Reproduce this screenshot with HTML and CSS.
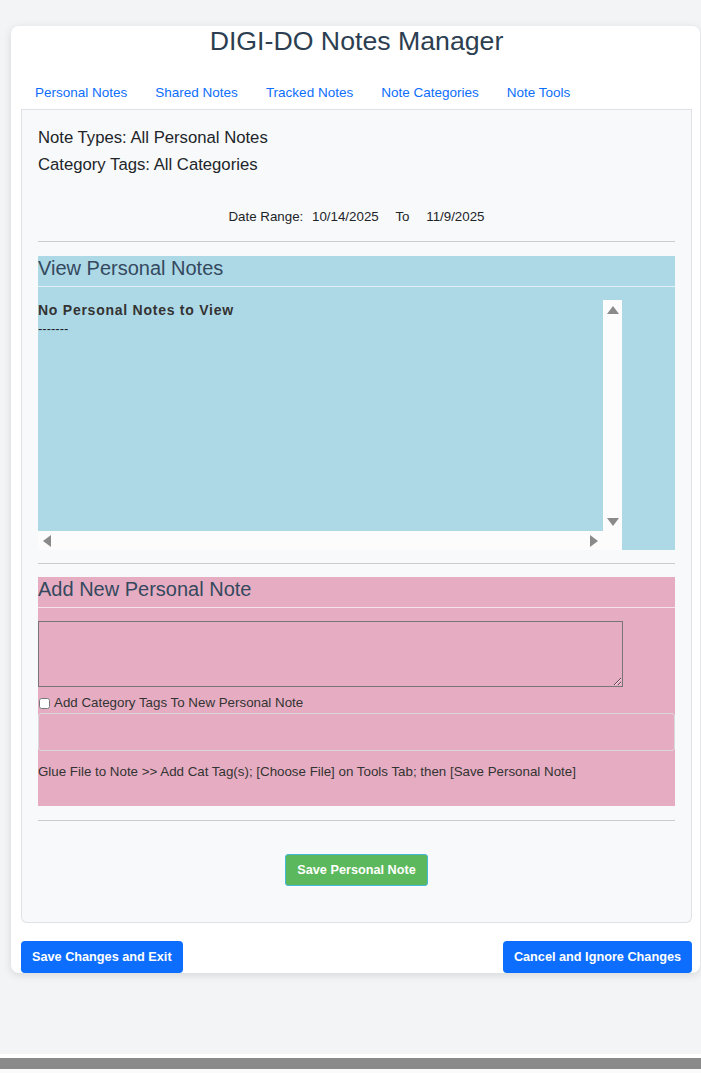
FILE: index.html
```html
<!DOCTYPE html>
<html lang="en">
<head>
  <meta charset="UTF-8" />
  <meta name="viewport" content="width=device-width, initial-scale=1.0" />
  <title>DIGI-DO Notes Manager</title>
  <link rel="stylesheet" href="styles.css">
</head>
<body>
  <div class="card">
    <h1 class="page-title">DIGI-DO Notes Manager</h1>
    <nav class="tabs">
      <a href="#" class="tab">Personal Notes</a>
      <a href="#" class="tab">Shared Notes</a>
      <a href="#" class="tab">Tracked Notes</a>
      <a href="#" class="tab">Note Categories</a>
      <a href="#" class="tab">Note Tools</a>
    </nav>
    <div class="tab-panel">
      <div class="filter-line">Note Types: All Personal Notes</div>
      <div class="filter-line">Category Tags: All Categories</div>
      <div class="date-range">
        <span>Date Range:</span>
        <span class="date-from">10/14/2025</span>
        <span class="date-to">To</span>
        <span>11/9/2025</span>
      </div>
      <hr class="divider">

      <section class="notes-block view-block">
        <h2 class="block-title">View Personal Notes</h2>
        <div class="scroll-box">
          <div class="scroll-content">
            <div class="empty-msg">No Personal Notes to View</div>
            <div class="dashes">-------</div>
          </div>
          <div class="vbar">
            <span class="arrow arrow-up"></span>
            <span class="arrow arrow-down"></span>
          </div>
          <div class="hbar">
            <span class="arrow arrow-left"></span>
            <span class="arrow arrow-right"></span>
          </div>
          <div class="corner"></div>
        </div>
      </section>
      <hr class="divider divider-tight">

      <section class="notes-block add-block">
        <h2 class="block-title">Add New Personal Note</h2>
        <textarea class="note-input"></textarea>
        <label class="tag-check"><input type="checkbox"> Add Category Tags To New Personal Note</label>
        <div class="tag-box"></div>
        <p class="hint">Glue File to Note &gt;&gt; Add Cat Tag(s); [Choose File] on Tools Tab; then [Save Personal Note]</p>
      </section>
      <hr class="divider divider-wide">

      <div class="save-row">
        <button class="btn btn-green">Save Personal Note</button>
      </div>
    </div>
    <div class="footer-actions">
      <button class="btn btn-blue">Save Changes and Exit</button>
      <button class="btn btn-blue">Cancel and Ignore Changes</button>
    </div>
  </div>
  <div class="page-bar"></div>
</body>
</html>
```

FILE: styles.css
```css
* { box-sizing: border-box; }
html, body { margin: 0; padding: 0; }
body {
  font-family: 'Liberation Sans', Arial, sans-serif;
  background: #f3f4f6;
  color: #212529;
  min-height: 100vh;
  display: flex;
  flex-direction: column;
  padding: 26px 1px 0 11px;
}
.card {
  background: #fff;
  border-radius: 8px;
  box-shadow: 0 2px 8px rgba(0, 0, 0, 0.12);
  padding: 0 8px 0 10px;
}
.page-title {
  margin: 0;
  text-align: center;
  font-size: 26.7px;
  font-weight: 400;
  line-height: 31px;
  color: #2c3e50;
}
.tabs {
  display: flex;
  margin-top: 17px;
  border-bottom: 1px solid #dee2e6;
}
.tab {
  padding: 10px 14px 7px;
  font-size: 13.5px;
  line-height: 18px;
  color: #0d6efd;
  text-decoration: none;
}
.tab-panel {
  background: #f8f9fa;
  border: 1px solid #dee2e6;
  border-top: none;
  border-radius: 0 0 6px 6px;
  padding: 14px 16px 36px 16px;
}
.filter-line {
  font-size: 16.7px;
  line-height: 27px;
  color: #212529;
}
.date-range {
  margin-top: 29px;
  text-align: center;
  font-size: 13.33px;
  line-height: 20px;
  color: #212529;
}
.date-from { margin-left: 5px; }
.date-to { margin: 0 13px; }
.divider {
  border: none;
  border-top: 1px solid #ccc;
  margin: 14px 0;
}
.divider-tight { margin: 13px 0; }
.view-block { background: #add8e6; }
.add-block { background: #e6adc2; padding-bottom: 26px; }
.block-title {
  margin: 0;
  font-size: 20px;
  font-weight: 400;
  line-height: 24px;
  color: #34495e;
  padding-bottom: 6px;
  border-bottom: 1px solid rgba(255, 255, 255, 0.65);
}
.scroll-box {
  margin-top: 13px;
  width: 584px;
  height: 250px;
  display: grid;
  grid-template-columns: 1fr 19px;
  grid-template-rows: 1fr 19px;
}
.scroll-content { overflow: hidden; }
.empty-msg {
  font-weight: bold;
  font-size: 14px;
  letter-spacing: 0.75px;
  line-height: 20px;
  color: #333;
}
.dashes { font-size: 13px; line-height: 17px; }
.vbar, .hbar, .corner { background: #fcfcfc; }
.vbar {
  display: flex;
  flex-direction: column;
  justify-content: space-between;
  align-items: center;
  padding: 6px 0 5px;
}
.hbar {
  display: flex;
  justify-content: space-between;
  align-items: center;
  padding: 0 5px;
}
.arrow { width: 0; height: 0; display: block; }
.arrow-up { border-left: 6px solid transparent; border-right: 6px solid transparent; border-bottom: 8px solid #8a8a8a; }
.arrow-down { border-left: 6px solid transparent; border-right: 6px solid transparent; border-top: 8px solid #8a8a8a; }
.arrow-left { border-top: 6px solid transparent; border-bottom: 6px solid transparent; border-right: 8px solid #8a8a8a; }
.arrow-right { border-top: 6px solid transparent; border-bottom: 6px solid transparent; border-left: 8px solid #8a8a8a; }
.note-input {
  display: block;
  margin-top: 13px;
  width: 585px;
  height: 66px;
  background: transparent;
  border: 1px solid #767676;
  font-family: inherit;
}
.tag-check {
  display: flex;
  align-items: center;
  margin: 8px 0 2px;
  font-size: 13.33px;
  line-height: 16px;
  color: #333;
}
.tag-check input { margin: 0 4px 0 1px; width: 11px; height: 11px; }
.tag-box {
  height: 38px;
  border: 1px solid #d9d9d9;
  border-radius: 3px;
}
.hint {
  margin: 13px 0 0;
  font-size: 13.33px;
  line-height: 16px;
  color: #333;
}
.save-row {
  display: flex;
  justify-content: center;
  padding-top: 19px;
}
.btn {
  font-family: inherit;
  font-size: 12.7px;
  font-weight: bold;
  color: #fff;
  border-radius: 4px;
  cursor: pointer;
}
.btn-green {
  background: #5cb85c;
  border: 1px solid #46b8da;
  padding: 0 11px;
  height: 32px;
  border-radius: 3px;
}
.btn-blue {
  background: #0d6efd;
  border: none;
  padding: 0 11px;
  height: 32px;
}
.footer-actions {
  display: flex;
  justify-content: space-between;
  margin-top: 18px;
}
.page-bar {
  margin: auto -1px 0 -11px;
  height: 19px;
  border-top: 4px solid #fff;
  border-bottom: 4px solid #fafafa;
  background: #8a8a8a;
}
```
